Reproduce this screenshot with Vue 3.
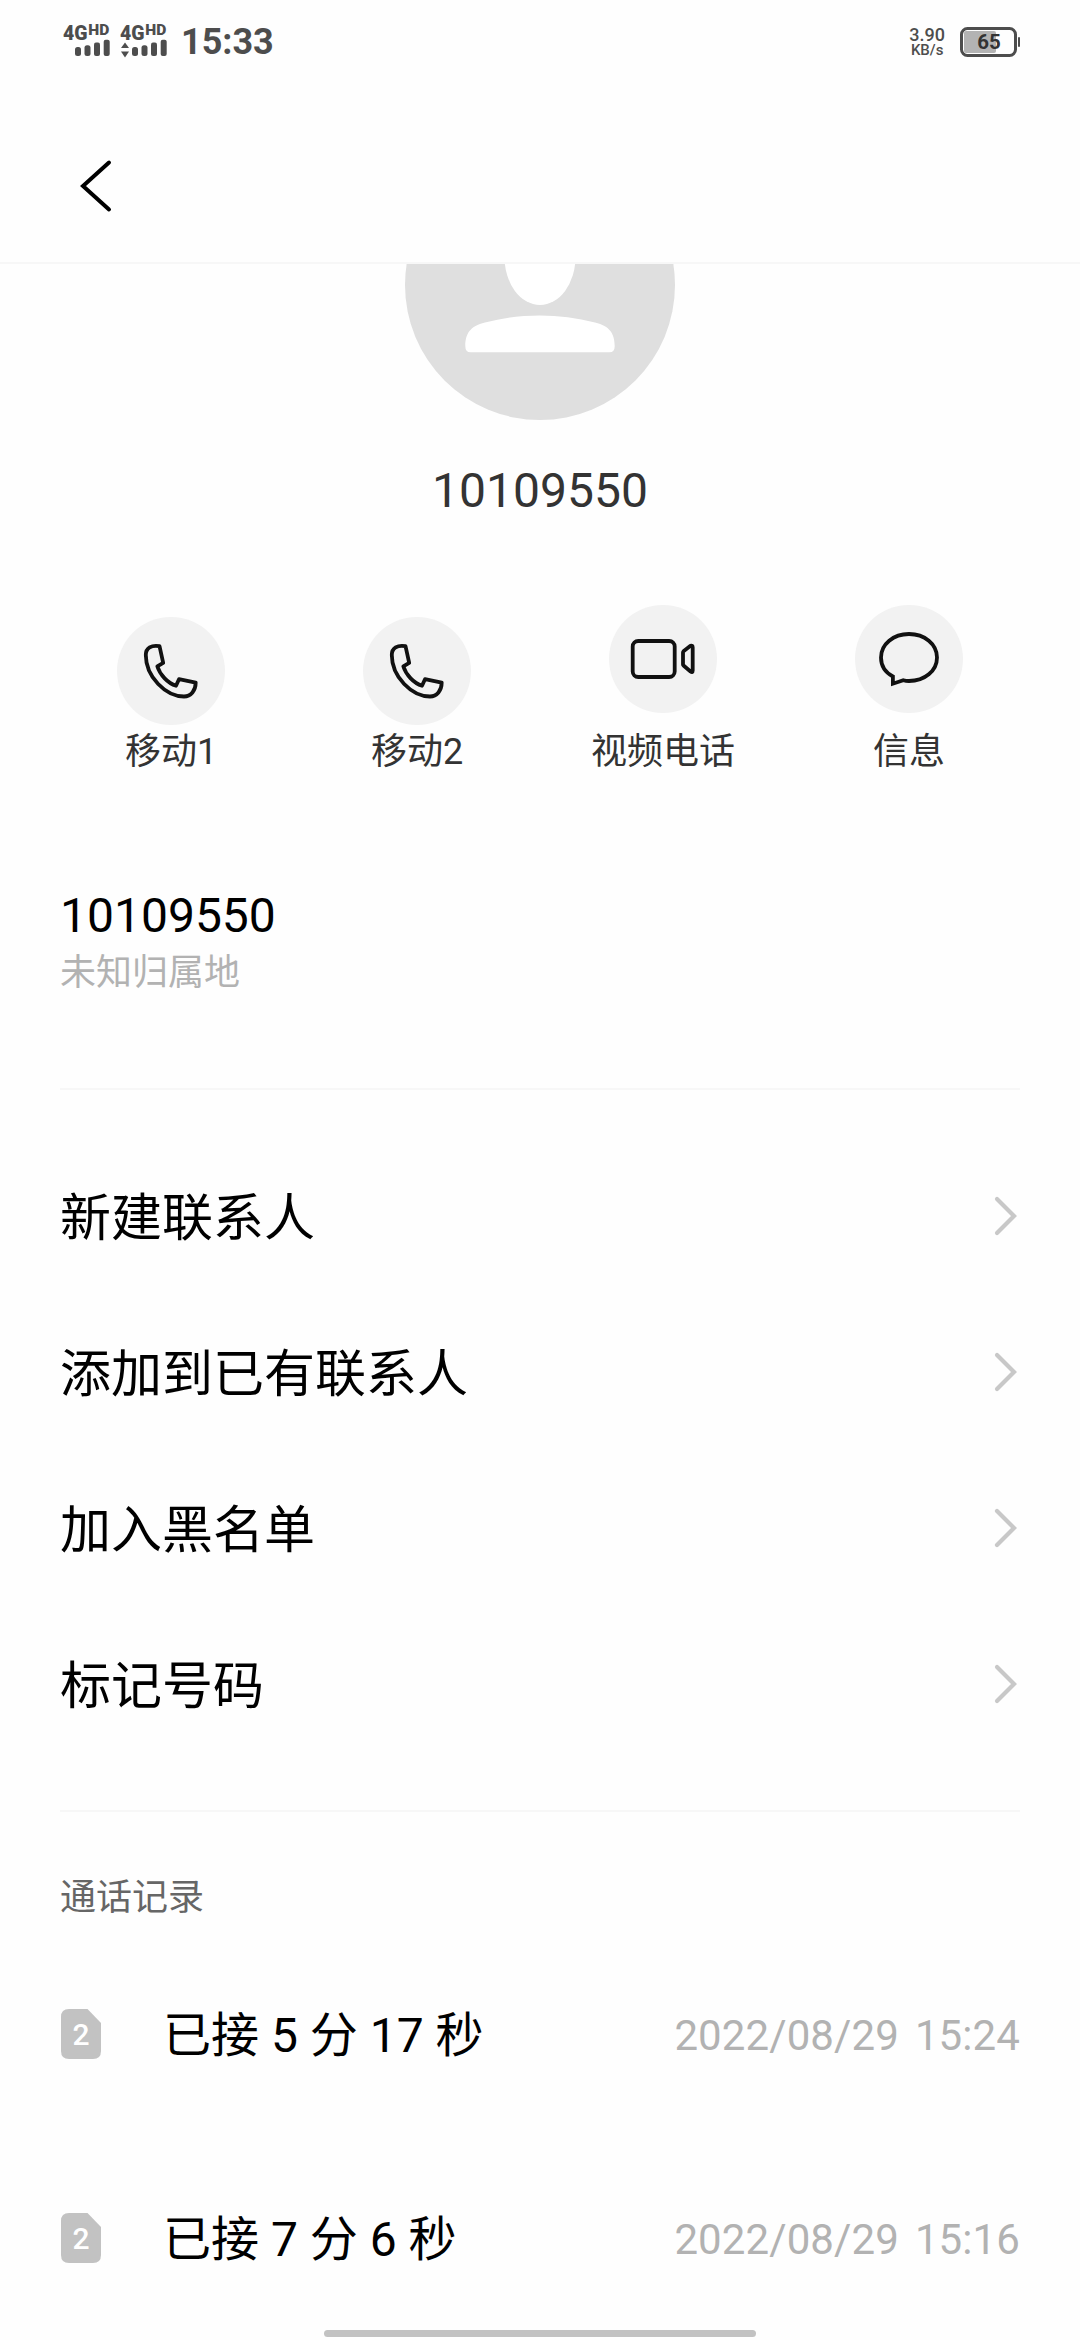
<script setup>
const contact = {
  number: '10109550',
  location: '未知归属地',
}

const actions = [
  { id: 'sim1', label: '移动1', icon: 'phone', low: true },
  { id: 'sim2', label: '移动2', icon: 'phone', low: true },
  { id: 'video', label: '视频电话', icon: 'video' },
  { id: 'message', label: '信息', icon: 'message' },
]

const options = ['新建联系人', '添加到已有联系人', '加入黑名单', '标记号码']

const calls = [
  { sim: 2, text: '已接 5 分 17 秒', date: '2022/08/29', time: '15:24' },
  { sim: 2, text: '已接 7 分 6 秒', date: '2022/08/29', time: '15:16' },
]
</script>

<template>
  <div class="screen">
    <header class="status-bar">
      <div class="signals">
        <svg v-for="n in 2" :key="n" class="signal" width="48" height="36" viewBox="0 0 48 36">
          <text class="net" x="0" y="18" textLength="24.5" lengthAdjust="spacingAndGlyphs">4G</text>
          <text class="hd" x="25.3" y="13" textLength="21" lengthAdjust="spacingAndGlyphs">HD</text>
          <g v-if="n === 2">
            <path d="M5 20.5 9 26H1Z" />
            <path d="M5 35.5 9 29.5H1Z" />
          </g>
          <rect x="12" y="25" width="6" height="9" rx="2.5" />
          <rect x="21.5" y="23.3" width="6" height="10.7" rx="2.5" />
          <rect x="31" y="20.5" width="6" height="13.5" rx="2" />
          <rect x="40.7" y="17.7" width="6" height="16.3" rx="2" />
        </svg>
      </div>
      <span class="clock">15:33</span>
      <div class="speed">
        <span class="rate">3.90</span>
        <span class="unit">KB/s</span>
      </div>
      <svg class="battery" width="60" height="30" viewBox="0 0 60 30">
        <rect class="level" x="4" y="4" width="32" height="22" rx="2" />
        <rect class="case" x="1.5" y="1.5" width="54" height="27" rx="6" />
        <rect x="58" y="10" width="2" height="10" rx="1" />
        <text x="17.2" y="22.2">65</text>
      </svg>
    </header>

    <nav class="nav">
      <svg class="back" width="40" height="60" viewBox="0 0 40 60">
        <path d="M33 6.5 7 30 33 53.5" />
      </svg>
    </nav>

    <main>
      <section class="profile">
        <svg class="avatar" width="270" height="156" viewBox="0 114 270 156">
          <circle cx="135" cy="135" r="135" fill="#dfdfdf" />
          <ellipse cx="135" cy="107" rx="35.5" ry="48" fill="#fff" />
          <path
            d="M60.3 196C60.3 184 65 176 80 172.5C116 163 154 163 190 172.5C205 176 209.7 184 209.7 196Q209.7 202.3 204.5 202.3H65.5Q60.3 202.3 60.3 196Z"
            fill="#fff"
          />
        </svg>
        <h1>{{ contact.number }}</h1>
      </section>

      <section class="actions">
        <button v-for="action in actions" :key="action.id" type="button" class="action">
          <span class="action-icon" :class="{ low: action.low }">
            <svg width="108" height="108" viewBox="0 0 108 108">
              <path
                v-if="action.icon === 'phone'"
                stroke-linejoin="round"
                d="M42.5 29.2 46.2 45.8 40.3 49.3C43 58 51 66.5 59 68.7L62 62.2 78.7 65.6C78.7 73.5 74 79.5 67 79.5C49 79.5 28.8 60 28.8 38C28.8 31 34.5 27.8 42.5 29.2Z"
              />
              <template v-else-if="action.icon === 'video'">
                <rect x="23.7" y="36" width="42" height="36" rx="5.5" />
                <path
                  stroke-linejoin="round"
                  d="M74 47.5Q74 46.8 74.5 46.3L81.5 40.8Q83.7 40 83.7 42.5V65.5Q83.7 68 81.5 66.5L74.5 60.5Q74 60 74 59.5Z"
                />
              </template>
              <path
                v-else
                d="M37.9 71.5C30.5 67.5 26 60.5 26 52.5C26 39 38.5 29 54 29S82 39 82 52.5S69.5 76 54 76C52 76 50 75.7 48.3 75.2L37.9 78.7Z"
              />
            </svg>
          </span>
          <span class="action-label">{{ action.label }}</span>
        </button>
      </section>

      <section class="number">
        <p class="number-value">{{ contact.number }}</p>
        <p class="number-location">{{ contact.location }}</p>
      </section>

      <ul class="options">
        <li v-for="option in options" :key="option">
          <span>{{ option }}</span>
          <svg width="26" height="42" viewBox="0 0 26 42">
            <path d="M4 4 21 21 4 38" />
          </svg>
        </li>
      </ul>

      <section class="history">
        <h2>通话记录</h2>
        <div v-for="call in calls" :key="call.time" class="call">
          <svg class="sim" width="40" height="50" viewBox="0 0 40 50">
            <path d="M8 0H26.5L40 14V42Q40 50 32 50H8Q0 50 0 42V8Q0 0 8 0Z" />
            <text x="20" y="36" text-anchor="middle">{{ call.sim }}</text>
          </svg>
          <span class="call-text">{{ call.text }}</span>
          <span class="call-time">
            <span>{{ call.date }}</span>
            <span>{{ call.time }}</span>
          </span>
        </div>
      </section>
    </main>

    <div class="home-bar"></div>
  </div>
</template>

<style>
body {
  margin: 0;
  background: #fefefe;
}
</style>

<style scoped>
.screen {
  display: flex;
  flex-direction: column;
  width: 1080px;
  height: 2340px;
  overflow: hidden;
  background: #fefefe;
  color: #000;
  font-family: Roboto, 'Noto Sans CJK SC', sans-serif;
}

h1,
h2,
p,
ul {
  margin: 0;
  padding: 0;
  font-weight: 400;
}

.status-bar {
  display: flex;
  flex: none;
  align-items: center;
  height: 84px;
  padding: 0 60px 0 63px;
  color: #4d4d4d;
  fill: #4d4d4d;
}

.signals {
  display: flex;
  gap: 9px;
  padding-bottom: 4px;
}

.net {
  font-size: 20.5px;
  font-weight: 900;
}

.hd {
  font-size: 14px;
  font-weight: 900;
}

.clock {
  margin-left: 13px;
  font-size: 36px;
  font-weight: 700;
  line-height: 42px;
}

.speed {
  display: flex;
  flex-direction: column;
  align-items: center;
  margin-left: auto;
  font-weight: 500;
}

.rate {
  font-size: 18px;
  line-height: 16px;
}

.unit {
  font-size: 15px;
  line-height: 14px;
}

.battery {
  margin-left: 15px;
}

.battery .level {
  fill: #b3b3b3;
}

.battery .case {
  fill: none;
  stroke: #4d4d4d;
  stroke-width: 3;
}

.battery text {
  fill: #333;
  font-size: 20.5px;
  font-weight: 700;
}

.nav {
  display: flex;
  flex: none;
  align-items: center;
  box-sizing: border-box;
  height: 180px;
  padding: 26px 0 0 76px;
  border-bottom: 2px solid #f7f7f7;
}

.back {
  fill: none;
  stroke: #000;
  stroke-width: 4;
  stroke-linecap: round;
}

main {
  flex: none;
  height: 2066px;
  overflow: hidden;
}

.profile {
  display: flex;
  flex-direction: column;
  align-items: center;
  height: 341px;
}

.avatar {
  display: block;
}

h1 {
  margin-top: 43px;
  color: #333;
  font-size: 48px;
  line-height: 56px;
}

.actions {
  display: grid;
  grid-template-columns: repeat(4, 1fr);
  height: 265px;
  padding: 0 48px;
}

.action {
  display: flex;
  flex-direction: column;
  align-items: center;
  border: 0;
  padding: 0;
  background: none;
  font: inherit;
}

.action-icon {
  display: flex;
  height: 120px;
}

.action-icon.low {
  align-items: flex-end;
}

.action-icon svg {
  border-radius: 50%;
  background: #f2f2f2;
  fill: none;
  stroke: #111;
  stroke-width: 3.8;
}

.action-label {
  color: #333;
  font-size: 36px;
  line-height: 54px;
}

.number {
  height: 218px;
  margin: 0 60px;
  border-bottom: 2px solid #f7f7f7;
}

.number-value {
  padding-top: 18px;
  font-size: 48px;
  line-height: 56px;
}

.number-location {
  padding-top: 2px;
  color: #b2b2b2;
  font-size: 36px;
  line-height: 54px;
}

.options {
  margin: 0 60px;
  padding: 48px 0 48px;
  border-bottom: 2px solid #f7f7f7;
  list-style: none;
}

.options li {
  display: flex;
  align-items: center;
  justify-content: space-between;
  height: 156px;
  font-size: 51px;
  line-height: 74px;
}

.options li span {
  padding-top: 6px;
}

.options svg {
  margin-right: 1px;
  fill: none;
  stroke: #c8c8c8;
  stroke-width: 4.2;
  stroke-linecap: round;
}

.history {
  padding: 59px 60px 0;
}

h2 {
  padding-bottom: 7px;
  color: #666;
  font-size: 36px;
  line-height: 54px;
}

.call {
  display: flex;
  align-items: center;
  height: 204px;
}

.sim {
  margin-left: 1px;
  fill: #c2c2c2;
}

.sim text {
  fill: #fff;
  font-size: 30px;
  font-weight: 500;
}

.call-text {
  margin-left: 62px;
  padding-top: 3px;
  font-size: 48px;
  line-height: 70px;
}

.call-time {
  display: flex;
  gap: 16px;
  margin-left: auto;
  padding-top: 2px;
  color: #b2b2b2;
  font-size: 42px;
  letter-spacing: 0.1px;
}

.home-bar {
  flex: none;
  width: 432px;
  height: 7px;
  margin: auto auto 3px;
  border-radius: 4px;
  background: #c2c2c2;
}
</style>
